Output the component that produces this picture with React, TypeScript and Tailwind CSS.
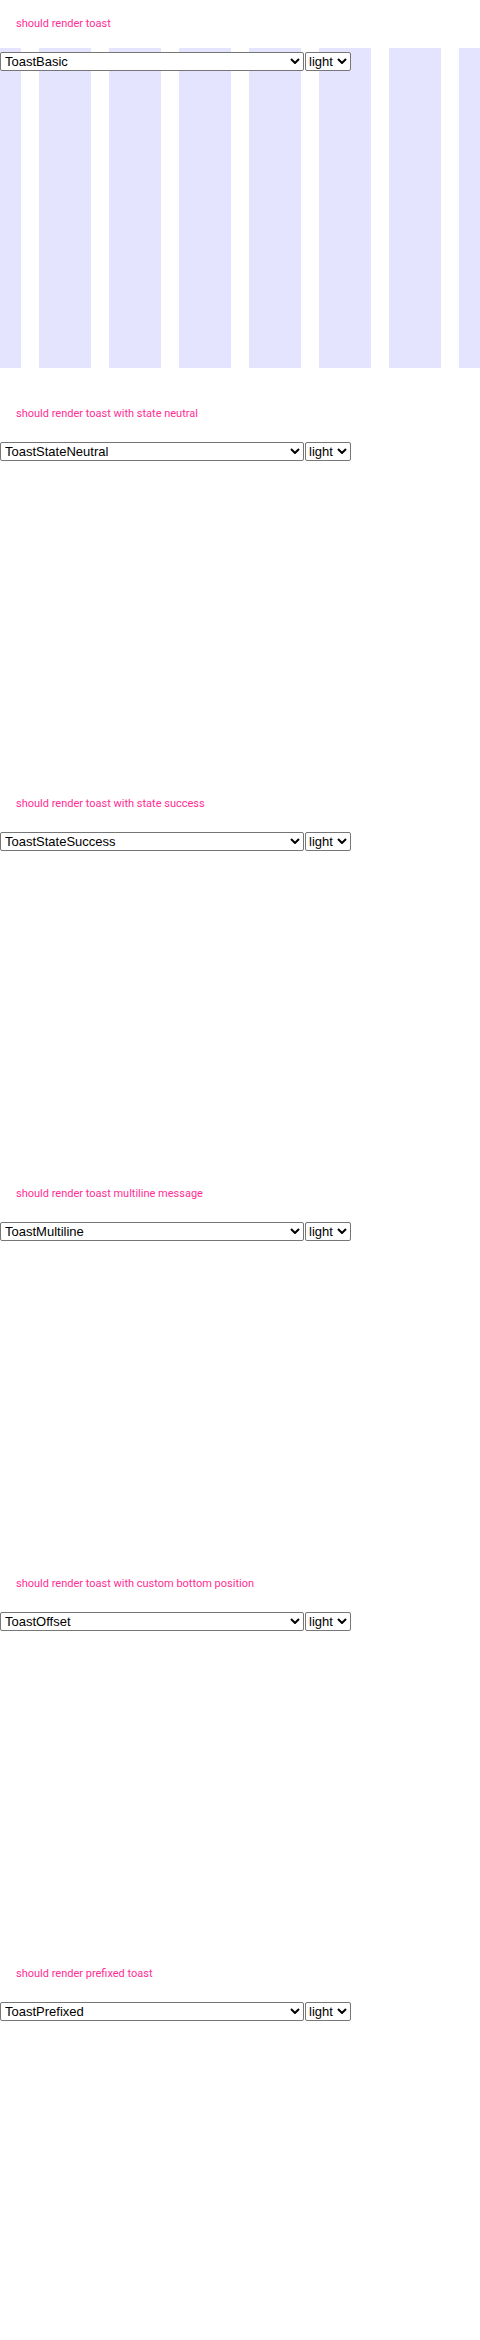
import React from "react";

const cases = [
  { title: "should render toast", story: "ToastBasic", grid: true },
  { title: "should render toast with state neutral", story: "ToastStateNeutral", grid: false },
  { title: "should render toast with state success", story: "ToastStateSuccess", grid: false },
  { title: "should render toast multiline message", story: "ToastMultiline", grid: false },
  { title: "should render toast with custom bottom position", story: "ToastOffset", grid: false },
  { title: "should render prefixed toast", story: "ToastPrefixed", grid: false },
];

function Chevron() {
  return (
    <svg
      width="10"
      height="6"
      viewBox="0 0 10 6"
      className="absolute right-[4px] top-[6px] pointer-events-none"
    >
      <path d="M1 1L5 5L9 1" fill="none" stroke="#000" strokeWidth="2" />
    </svg>
  );
}

function Pickers({ story }: { story: string }) {
  return (
    <div className="flex items-start gap-[1px] pt-[4px]">
      <div className="relative flex">
        <select
          defaultValue={story}
          className="appearance-none w-[304px] h-[19px] border border-[#767676] rounded-[2px] bg-white text-black pl-[4px] text-[13px] leading-[15px] font-['Liberation_Sans',Arial,sans-serif]"
        >
          <option value={story}>{story}</option>
        </select>
        <Chevron />
      </div>
      <div className="relative flex">
        <select
          defaultValue="light"
          className="appearance-none w-[46px] h-[19px] border border-[#767676] rounded-[2px] bg-white text-black pl-[3px] text-[13px] leading-[15px] font-['Liberation_Sans',Arial,sans-serif]"
        >
          <option value="light">light</option>
          <option value="dark">dark</option>
        </select>
        <Chevron />
      </div>
    </div>
  );
}

export default function App() {
  return (
    <div className="w-[480px] bg-white">
      {cases.map((c) => (
        <section key={c.story} className="h-[390px] overflow-hidden">
          <div className="pt-[17px] pl-[16px] text-[11px] leading-[13px] text-[#ff2d95] font-['Roboto',sans-serif]">
            {c.title}
          </div>
          <div
            className={
              c.grid
                ? "mt-[18px] h-[320px] bg-[repeating-linear-gradient(90deg,#e4e4ff_0_21px,transparent_21px_39px,#e4e4ff_39px_70px)]"
                : "mt-[18px] h-[320px]"
            }
          >
            <Pickers story={c.story} />
          </div>
        </section>
      ))}
    </div>
  );
}
